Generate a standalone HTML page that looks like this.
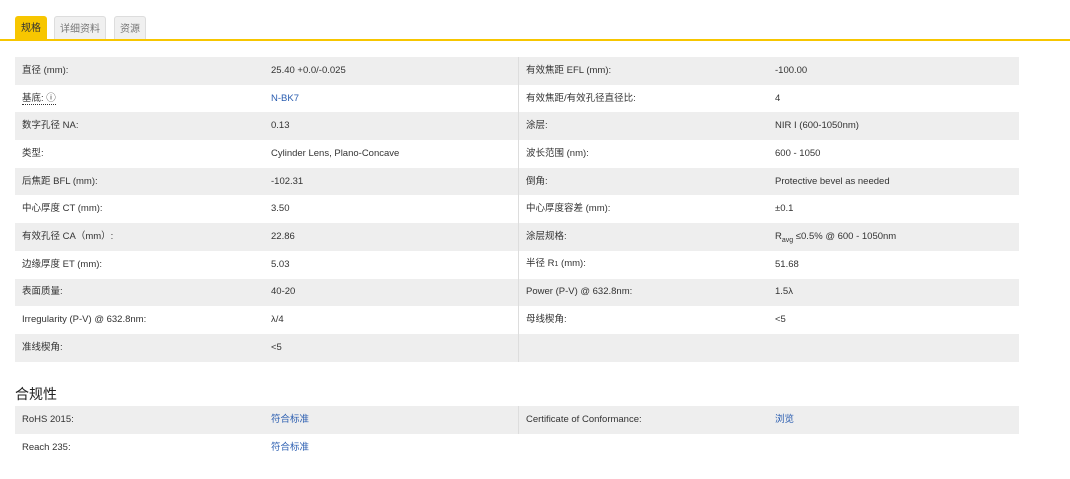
<!DOCTYPE html>
<html><head><meta charset="utf-8"><style>
body{margin:0;background:#fff;font-family:"Liberation Sans","Noto Sans CJK SC",sans-serif;color:#333;font-size:9.5px;width:1070px;height:479px;overflow:hidden;position:relative}
.tab{position:absolute;top:16px;height:24px;line-height:26px;font-size:10px;text-align:center;border-radius:3px 3px 0 0;box-sizing:border-box}
.t1{left:15px;width:32px;background:#f7c600;color:#333}
.t2{left:54px;width:52px;background:#f0f0f0;border:1px solid #ddd;border-bottom:none;color:#777}
.t3{left:114px;width:32px;background:#f0f0f0;border:1px solid #ddd;border-bottom:none;color:#777}
.line{position:absolute;top:39px;left:0;width:1070px;height:2px;background:#f7c600}
table{position:absolute;left:15px;width:1004px;border-collapse:collapse}
td{height:27.7px;padding:0 0 0 7px;white-space:nowrap;vertical-align:middle;line-height:12px}
td span.v{display:inline-block;line-height:12px;height:12px;vertical-align:middle}
tr:nth-child(odd) td{background:#eeeeee}
td.c1{width:242px}td.c2{width:247px;border-right:1px solid #ddd}td.c3{width:242px}
a{color:#2a5db0;text-decoration:none}
h3{position:absolute;left:15px;top:384px;margin:0;font-size:14px;font-weight:normal;color:#222}
.dot{border-bottom:1px dotted #333}
sub{line-height:0;font-size:7px}
</style></head><body>
<div class="tab t1">规格</div><div class="tab t2">详细资料</div><div class="tab t3">资源</div>
<div class="line"></div>
<table style="top:57px">
<tr><td class="c1">直径 (mm):</td><td class="c2">25.40 +0.0/-0.025</td><td class="c3">有效焦距 EFL (mm):</td><td>-100.00</td></tr>
<tr><td class="c1"><span class="dot">基底: ⓘ</span></td><td class="c2"><a>N-BK7</a></td><td class="c3">有效焦距/有效孔径直径比:</td><td>4</td></tr>
<tr><td class="c1">数字孔径 NA:</td><td class="c2">0.13</td><td class="c3">涂层:</td><td>NIR I (600-1050nm)</td></tr>
<tr><td class="c1">类型:</td><td class="c2">Cylinder Lens, Plano-Concave</td><td class="c3">波长范围 (nm):</td><td>600 - 1050</td></tr>
<tr><td class="c1">后焦距 BFL (mm):</td><td class="c2">-102.31</td><td class="c3">倒角:</td><td>Protective bevel as needed</td></tr>
<tr><td class="c1">中心厚度 CT (mm):</td><td class="c2">3.50</td><td class="c3">中心厚度容差 (mm):</td><td>±0.1</td></tr>
<tr><td class="c1">有效孔径 CA（mm）:</td><td class="c2">22.86</td><td class="c3">涂层规格:</td><td>R<sub>avg</sub> ≤0.5% @ 600 - 1050nm</td></tr>
<tr><td class="c1">边缘厚度 ET (mm):</td><td class="c2">5.03</td><td class="c3">半径 R<span style="font-size:7px">1</span> (mm):</td><td>51.68</td></tr>
<tr><td class="c1">表面质量:</td><td class="c2">40-20</td><td class="c3">Power (P-V) @ 632.8nm:</td><td>1.5λ</td></tr>
<tr><td class="c1">Irregularity (P-V) @ 632.8nm:</td><td class="c2">λ/4</td><td class="c3">母线楔角:</td><td>&lt;5</td></tr>
<tr><td class="c1">准线楔角:</td><td class="c2">&lt;5</td><td class="c3"></td><td></td></tr>
</table>
<h3>合规性</h3>
<table style="top:406px">
<tr><td class="c1">RoHS 2015:</td><td class="c2"><a>符合标准</a></td><td class="c3">Certificate of Conformance:</td><td><a>浏览</a></td></tr>
<tr><td class="c1">Reach 235:</td><td class="c2" style="border-right:none"><a>符合标准</a></td><td class="c3"></td><td></td></tr>
</table>
</body></html>
